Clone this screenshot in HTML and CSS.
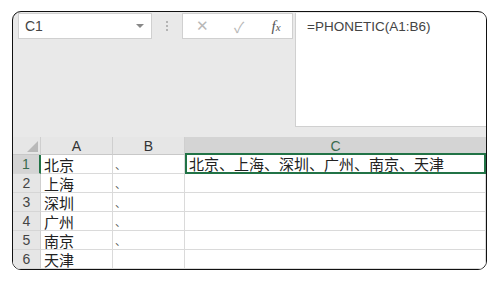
FILE: index.html
```html
<!DOCTYPE html>
<html lang="zh">
  <head>
    <meta charset="UTF-8" />
    <title>PHONETIC</title>
    <link rel="stylesheet" href="styles.css">
  </head>
  <body>
    <div class="frame">
      <div class="bar">
        <div class="namebox">
          <span>C1</span>
          <span class="arrow"></span>
        </div>
        <div class="sep"><i></i><i></i><i></i></div>
        <div class="btns">
          <span class="btn">&#x2715;</span>
          <span class="btn">&#x2713;</span>
          <span class="btn fx"><i>f</i><i class="x">x</i></span>
        </div>
        <div class="formula">=PHONETIC(A1:B6)</div>
      </div>

      <div class="grid">
        <div class="hd corner"><span class="tri"></span></div>
        <div class="hd">A</div>
        <div class="hd">B</div>
        <div class="hd sel">C</div>

        <div class="rn sel">1</div>
        <div class="cell">北京</div>
        <div class="cell dot">、</div>
        <div class="cell active">北京、上海、深圳、广州、南京、天津</div>

        <div class="rn">2</div>
        <div class="cell">上海</div>
        <div class="cell dot">、</div>
        <div class="cell"></div>

        <div class="rn">3</div>
        <div class="cell">深圳</div>
        <div class="cell dot">、</div>
        <div class="cell"></div>

        <div class="rn">4</div>
        <div class="cell">广州</div>
        <div class="cell dot">、</div>
        <div class="cell"></div>

        <div class="rn">5</div>
        <div class="cell">南京</div>
        <div class="cell dot">、</div>
        <div class="cell"></div>

        <div class="rn">6</div>
        <div class="cell">天津</div>
        <div class="cell"></div>
        <div class="cell"></div>
      </div>
    </div>
  </body>
</html>
```

FILE: styles.css
```css
body {
  margin: 0;
  padding: 11px 0 0 12px;
  background: #fff;
  font-family: "Liberation Sans", "Noto Sans CJK SC", sans-serif;
}

.frame {
  width: 473px;
  height: 257px;
  border: 1px solid #111;
  border-radius: 9px;
  overflow: hidden;
  background: #e9e9e9;
}

.bar {
  display: flex;
  align-items: flex-start;
  height: 125px;
  padding: 1px 0 0 5px;
  box-sizing: border-box;
}

.namebox {
  width: 134px;
  height: 26px;
  box-sizing: border-box;
  background: #fff;
  border: 1px solid #d0d0d0;
  display: flex;
  align-items: center;
  justify-content: space-between;
  padding: 0 7px 0 6px;
  font-size: 14px;
  color: #444;
}

.arrow {
  width: 0;
  height: 0;
  border-left: 4px solid transparent;
  border-right: 4px solid transparent;
  border-top: 4px solid #888;
}

.sep {
  width: 30px;
  height: 26px;
  display: flex;
  flex-direction: column;
  align-items: center;
  justify-content: center;
  gap: 2px;
}

.sep i {
  width: 2px;
  height: 2px;
  background: #b4b4b4;
}

.btns {
  width: 111px;
  height: 26px;
  box-sizing: border-box;
  background: #fff;
  border: 1px solid #d0d0d0;
  display: flex;
  align-items: center;
  padding-left: 11px;
  gap: 21px;
  color: #b8b8b8;
  font-size: 15px;
}

.btn {
  width: 16px;
  text-align: center;
}

.fx {
  font-family: "Liberation Serif", serif;
  color: #555;
  font-size: 15px;
}

.fx .x {
  font-size: 11px;
}

.formula {
  flex: 1;
  height: 114px;
  margin-left: 2px;
  box-sizing: border-box;
  background: #fff;
  border-left: 1px solid #d0d0d0;
  border-bottom: 1px solid #d0d0d0;
  padding: 6px 0 0 11px;
  font-size: 13.5px;
  color: #444;
}

.grid {
  display: grid;
  grid-template-columns: 28px 72px 72px 1fr;
  grid-template-rows: 18px repeat(6, 19px);
  background: #fff;
  font-family: "Noto Sans CJK SC", sans-serif;
}

.hd {
  background: #e6e6e6;
  border-right: 1px solid #cfcfcf;
  border-bottom: 1px solid #c8c8c8;
  text-align: center;
  font-family: "Liberation Sans", sans-serif;
  font-size: 14px;
  line-height: 18px;
  color: #333;
  box-sizing: border-box;
}

.hd.sel {
  background: #d4d4d4;
  border-bottom: 2px solid #217346;
  color: #3a6b4e;
  border-right: none;
}

.corner {
  position: relative;
}

.tri {
  position: absolute;
  right: 2px;
  bottom: 2px;
  width: 0;
  height: 0;
  border-left: 11px solid transparent;
  border-bottom: 11px solid #b9b9b9;
}

.rn {
  background: #e6e6e6;
  border-right: 1px solid #cfcfcf;
  border-bottom: 1px solid #d6d6d6;
  text-align: center;
  font-family: "Liberation Sans", sans-serif;
  font-size: 14px;
  line-height: 19px;
  color: #444;
  box-sizing: border-box;
}

.rn.sel {
  background: #d4d4d4;
  border-right: 2px solid #217346;
  color: #3a6b4e;
}

.cell {
  border-right: 1px solid #dadada;
  border-bottom: 1px solid #dadada;
  box-sizing: border-box;
  padding-left: 3px;
  font-size: 15px;
  line-height: 19px;
  color: #222;
  white-space: nowrap;
}

.cell.dot {
  font-size: 11px;
  color: #555;
  line-height: 19px;
  padding-left: 2px;
}

.cell.active {
  border: 2px solid #217346;
  border-top: none;
  padding-left: 2px;
  line-height: 18px;
}
```
